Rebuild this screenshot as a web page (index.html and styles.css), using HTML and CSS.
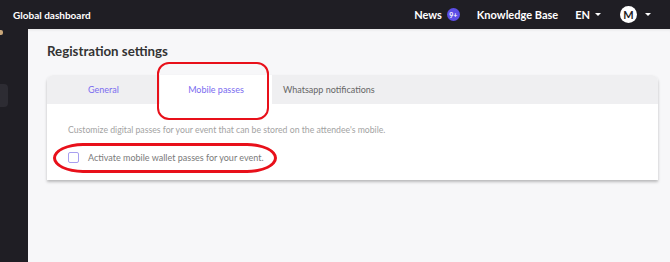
FILE: index.html
```html
<!DOCTYPE html>
<html lang="en">
<head>
  <meta charset="UTF-8" />
  <meta name="viewport" content="width=device-width, initial-scale=1.0"/>
  <title>Registration settings | Global dashboard</title>
  <link rel="stylesheet" href="styles.css">
</head>
<body>
  <header class="topbar">
    <div class="brand">Global dashboard</div>
    <nav class="topnav">
      <a class="nav-link">News <span class="badge">9+</span></a>
      <a class="nav-link">Knowledge Base</a>
      <a class="nav-link lang">EN <span class="caret"></span></a>
      <a class="nav-link user"><span class="avatar">M</span> <span class="caret"></span></a>
    </nav>
  </header>

  <div class="layout">
    <aside class="sidebar">
      <span class="side-logo"></span>
      <span class="side-item"></span>
    </aside>

    <main class="main">
      <h1 class="page-title">Registration settings</h1>

      <section class="card">
        <div class="tabs">
          <div class="tab">General</div>
          <div class="tab active">Mobile passes</div>
          <div class="tab muted">Whatsapp notifications</div>
        </div>
        <div class="card-body">
          <p class="hint">Customize digital passes for your event that can be stored on the attendee's mobile.</p>
          <label class="check">
            <input type="checkbox" />
            <span class="box"></span>
            Activate mobile wallet passes for your event.
          </label>
        </div>

        <!-- red highlight marks -->
        <span class="mark mark-tab"></span>
        <span class="mark mark-check"></span>
      </section>
    </main>
  </div>
</body>
</html>
```

FILE: styles.css
```css
* {
  box-sizing: border-box;
}
body {
  margin: 0;
  font-family: Lato, "Open Sans", sans-serif;
  background: #f7f7f9;
  height: 262px;
  overflow: hidden;
}

/* top bar */
.topbar {
  height: 29px;
  background: #1f1e24;
  color: #fff;
  display: flex;
  align-items: center;
  justify-content: space-between;
  padding: 0 19px 0 13px;
}
.brand {
  font-size: 10px;
  font-weight: 700;
}
.topnav {
  display: flex;
  align-items: center;
  gap: 17px;
}
.nav-link {
  font-size: 11px;
  font-weight: 700;
  display: flex;
  align-items: center;
  gap: 5px;
}
.badge {
  width: 13px;
  height: 13px;
  border-radius: 50%;
  background: #5c4ee6;
  font-size: 7px;
  display: inline-flex;
  align-items: center;
  justify-content: center;
}
.caret {
  width: 0;
  height: 0;
  border-left: 3px solid transparent;
  border-right: 3px solid transparent;
  border-top: 3px solid #fff;
  margin-left: 2px;
}
.lang {
  gap: 3px;
}
.user {
  gap: 6px;
  margin-left: 2px;
}
.avatar {
  width: 17px;
  height: 17px;
  border-radius: 50%;
  background: #fff;
  color: #1f1e24;
  font-size: 11px;
  display: inline-flex;
  align-items: center;
  justify-content: center;
}

/* layout */
.layout {
  display: flex;
  height: 233px;
}
.sidebar {
  width: 28px;
  background: #1f1e24;
  position: relative;
}
.side-logo {
  position: absolute;
  left: -2px;
  top: 1px;
  width: 5px;
  height: 5px;
  border-radius: 2px;
  background: #c9a77a;
}
.side-item {
  position: absolute;
  left: -6px;
  top: 55px;
  width: 14px;
  height: 23px;
  border-radius: 4px;
  background: #2d2c33;
}
.main {
  flex: 1;
  padding: 13px 12px 0 19px;
  box-shadow: inset 0 3px 3px -2px rgba(0, 0, 0, 0.08);
}
.page-title {
  margin: 0 0 15px;
  font-size: 13.3px;
  font-weight: 700;
  color: #333;
  line-height: 18px;
}

/* card */
.card {
  position: relative;
  background: #fff;
  border-radius: 6px 6px 0 0;
  box-shadow: 0 2px 3px rgba(0, 0, 0, 0.25);
}
.tabs {
  display: flex;
  height: 29px;
  background: #efeff1;
  border-radius: 6px 6px 0 0;
}
.tab {
  min-width: 113px;
  padding: 0 11px;
  display: flex;
  align-items: center;
  justify-content: center;
  font-size: 9px;
  color: #7b6cf0;
}
.tab.active {
  background: #fff;
  min-width: 112px;
}
.tab.muted {
  color: #666;
}
.card-body {
  padding: 20px 21px 17px;
}
.hint {
  margin: 0 0 16px;
  font-size: 8.7px;
  color: #a3a3a3;
  line-height: 12px;
}
.check {
  display: flex;
  align-items: center;
  gap: 9px;
  font-size: 9px;
  color: #7a7a7a;
}
.check input {
  display: none;
}
.box {
  width: 11px;
  height: 11px;
  border: 1px solid #a89ff0;
  border-radius: 2px;
}

/* red annotations */
.mark {
  position: absolute;
  border: 2.5px solid #e8101a;
  pointer-events: none;
}
.mark-tab {
  left: 110px;
  top: -13px;
  width: 112px;
  height: 58px;
  border-radius: 12px;
}
.mark-check {
  left: 6px;
  top: 68px;
  width: 224px;
  height: 30px;
  border-width: 3px;
  border-radius: 30px / 15px;
}
```
